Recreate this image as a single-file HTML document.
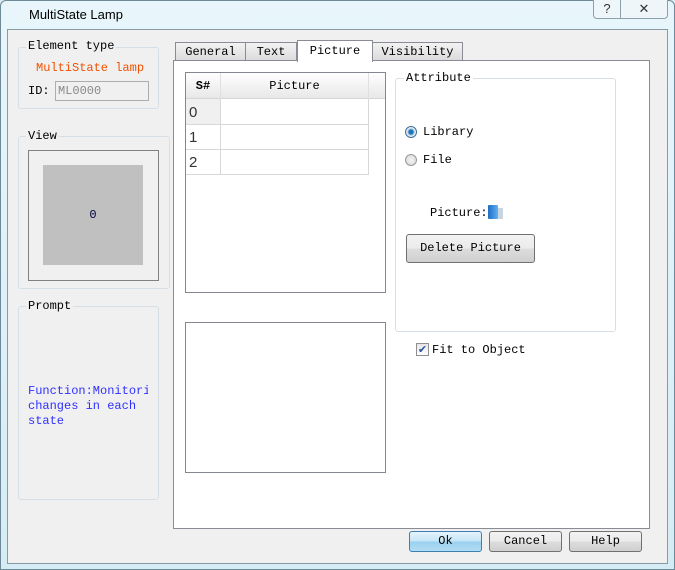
<!DOCTYPE html>
<html><head><style>
*{margin:0;padding:0;box-sizing:border-box}
body{width:675px;height:570px;position:relative;overflow:hidden;background:#dcecf4;font-family:"Liberation Mono","Noto Sans CJK SC",monospace;font-size:12px;color:#000}
.a{position:absolute}
.grp{position:absolute;border:1px solid #d5dfe5;border-radius:3px}
.lbl{position:absolute;background:#f0f0f0;padding:0 2px;line-height:13px}
.btn{position:absolute;border:1px solid #707070;border-radius:3px;background:linear-gradient(#f2f2f2,#ebebeb 50%,#dddddd 51%,#cfcfcf);text-align:center;line-height:19px}
.cell{position:absolute;border-right:1px solid #d8d8d8;border-bottom:1px solid #d8d8d8}
</style></head><body>
<div class="a" style="left:0;top:0;width:675px;height:570px;border:1px solid #6e8a99;border-radius:6px 6px 0 0;background:linear-gradient(#e8f6fb,#d6ecf5)"></div>
<div class="a" style="left:29px;top:7px;font-family:'Liberation Sans',sans-serif;font-size:13px">MultiState Lamp</div>
<div class="a" style="left:593px;top:0;width:28px;height:19px;border:1px solid #8aa0ad;border-top:none;border-radius:0 0 0 4px;background:#eef6fa;text-align:center;font:13px 'Liberation Sans';line-height:18px;color:#333">?</div>
<div class="a" style="left:621px;top:0;width:47px;height:19px;border:1px solid #8aa0ad;border-left:none;border-top:none;border-radius:0 0 4px 0;background:#eef6fa;text-align:center;font:13px 'Liberation Sans';line-height:18px;color:#333">✕</div>
<div class="a" style="left:7px;top:29px;width:661px;height:535px;background:#f0f0f0;border:1px solid #8a9aa4"></div>

<div class="grp" style="left:18px;top:47px;width:141px;height:62px"></div>
<div class="lbl" style="left:26px;top:40px">Element type</div>
<div class="a" style="left:36px;top:61px;color:#f05000">MultiState lamp</div>
<div class="a" style="left:28px;top:84px">ID:</div>
<div class="a" style="left:55px;top:81px;width:94px;height:20px;border:1px solid #adadad;background:#f0f0f0;color:#888;padding-left:2px;line-height:18px">ML0000</div>

<div class="grp" style="left:18px;top:136px;width:152px;height:153px"></div>
<div class="lbl" style="left:26px;top:130px">View</div>
<div class="a" style="left:28px;top:150px;width:131px;height:131px;border:1px solid #808080"></div>
<div class="a" style="left:43px;top:165px;width:100px;height:100px;background:#c0c0c0;text-align:center;line-height:100px;color:#000040">0</div>

<div class="grp" style="left:18px;top:306px;width:141px;height:194px"></div>
<div class="lbl" style="left:26px;top:300px">Prompt</div>
<div class="a" style="left:28px;top:384px;width:120px;overflow:hidden;white-space:nowrap;color:#3030ff;line-height:15px">Function:Monitoring<br>changes in each<br>state</div>

<div class="a" style="left:173px;top:60px;width:477px;height:469px;border:1px solid #898c95;background:#fff"></div>
<div class="a" style="left:175px;top:42px;width:71px;height:19px;border:1px solid #898c95;background:linear-gradient(#f2f2f2,#dcdcdc);text-align:center;line-height:18px">General</div>
<div class="a" style="left:246px;top:42px;width:51px;height:19px;border:1px solid #898c95;border-left:none;background:linear-gradient(#f2f2f2,#dcdcdc);text-align:center;line-height:18px">Text</div>
<div class="a" style="left:297px;top:40px;width:76px;height:22px;border:1px solid #898c95;border-bottom:none;background:#fff;text-align:center;line-height:20px">Picture</div>
<div class="a" style="left:373px;top:42px;width:90px;height:19px;border:1px solid #898c95;border-left:none;background:linear-gradient(#f2f2f2,#dcdcdc);text-align:center;line-height:18px">Visibility</div>

<div class="a" style="left:185px;top:72px;width:201px;height:221px;border:1px solid #828790;background:#fff"></div>
<div class="a" style="left:186px;top:73px;width:199px;height:26px;background:linear-gradient(#fff,#f3f3f3 50%,#e8e8e8);border-bottom:1px solid #d5d5d5"></div>
<div class="a" style="left:220px;top:73px;width:1px;height:26px;background:#e0e0e0"></div>
<div class="a" style="left:368px;top:73px;width:1px;height:26px;background:#e0e0e0"></div>
<div class="a" style="left:186px;top:79px;width:34px;text-align:center;font-weight:bold">S#</div>
<div class="a" style="left:221px;top:79px;width:147px;text-align:center">Picture</div>
<div class="cell" style="left:186px;top:99px;width:35px;height:26px;background:#f0f0f0"></div>
<div class="cell" style="left:221px;top:99px;width:148px;height:26px"></div>
<div class="cell" style="left:186px;top:125px;width:35px;height:25px"></div>
<div class="cell" style="left:221px;top:125px;width:148px;height:25px"></div>
<div class="cell" style="left:186px;top:150px;width:35px;height:25px"></div>
<div class="cell" style="left:221px;top:150px;width:148px;height:25px"></div>
<div class="a" style="left:189px;top:104px;font:15px 'Liberation Sans',sans-serif;color:#333">0</div>
<div class="a" style="left:189px;top:129px;font:15px 'Liberation Sans',sans-serif;color:#333">1</div>
<div class="a" style="left:189px;top:154px;font:15px 'Liberation Sans',sans-serif;color:#333">2</div>

<div class="a" style="left:185px;top:322px;width:201px;height:151px;border:1px solid #828790;background:#fff"></div>

<div class="grp" style="left:395px;top:78px;width:221px;height:254px;background:#fff"></div>
<div class="lbl" style="left:404px;top:72px;background:#fff">Attribute</div>
<div class="a" style="left:405px;top:126px;width:12px;height:12px;border-radius:50%;border:1px solid #3c6f9c;background:radial-gradient(#1f74b8 30%,#a8cbe6 45%,#e8eef4 60%)"></div>
<div class="a" style="left:423px;top:125px">Library</div>
<div class="a" style="left:405px;top:154px;width:12px;height:12px;border-radius:50%;border:1px solid #9a9a9a;background:radial-gradient(#f4f4f4,#d6d6d6)"></div>
<div class="a" style="left:423px;top:153px">File</div>
<div class="a" style="left:430px;top:206px">Picture:</div>
<div class="a" style="left:488px;top:205px;width:10px;height:14px;background:linear-gradient(90deg,#1e6cc8,#5fb0f0);border-radius:1px"></div>
<div class="a" style="left:498px;top:208px;width:5px;height:11px;background:#c8d4e0"></div>
<div class="btn" style="left:406px;top:234px;width:129px;height:29px;line-height:27px">Delete Picture</div>
<div class="a" style="left:416px;top:343px;width:13px;height:13px;border:1px solid #8f8f8f;background:linear-gradient(#e6e6e6,#fff);color:#2d4fa0;font-size:11px;line-height:11px;text-align:center;font-family:'DejaVu Sans'">✔</div>
<div class="a" style="left:432px;top:343px">Fit to Object</div>

<div class="btn" style="left:409px;top:531px;width:73px;height:21px;border-color:#3c7fb1;background:linear-gradient(#e5f4fc,#c4e5f6 50%,#98d1ef 51%,#b3dcf2)">Ok</div>
<div class="btn" style="left:489px;top:531px;width:73px;height:21px">Cancel</div>
<div class="btn" style="left:569px;top:531px;width:73px;height:21px">Help</div>
</body></html>
